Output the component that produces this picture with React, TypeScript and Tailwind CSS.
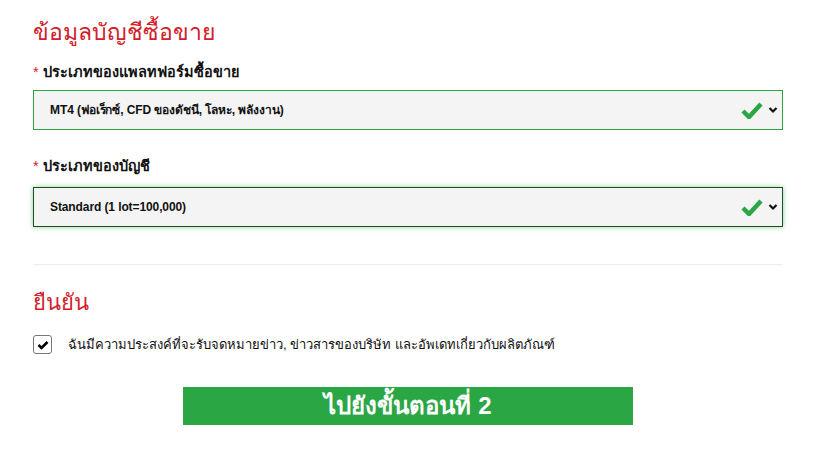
import React from "react";

const Check = () => (
  <svg width="22" height="18" viewBox="0 0 22 18" className="block">
    <path d="M2 10 L8 16 L20 3" fill="none" stroke="#2aa645" strokeWidth="4.5" strokeLinecap="butt" strokeLinejoin="miter" />
  </svg>
);

const Chevron = () => (
  <svg width="10" height="8" viewBox="0 0 10 8" className="block">
    <path d="M1.5 2 L5 5.5 L8.5 2" fill="none" stroke="#111" strokeWidth="2.2" />
  </svg>
);

function SelectBox({ value, focused }: { value: string; focused?: boolean }) {
  return (
    <div
      className={
        "h-[40px] flex items-center bg-[#f4f4f4] pl-[16px] pr-[4px] border " +
        (focused
          ? "border-[#1f4d24] shadow-[0_0_5px_rgba(40,167,69,0.55)]"
          : "border-[#2aa645]")
      }
    >
      <span className="flex-1 text-[12px] font-semibold text-[#111] tracking-[-0.1px]">{value}</span>
      <div className="flex items-center gap-[5px]">
        <Check />
        <Chevron />
      </div>
    </div>
  );
}

export default function App() {
  return (
    <div
      className="w-[821px] h-[458px] bg-white px-[33px] pt-[15px] text-[#111]"
      style={{ fontFamily: '"Liberation Sans", "Noto Sans", sans-serif' }}
    >
      <div className="w-[750px]">
        <h2 className="text-[23px] leading-[34px] text-[#d2202b]">ข้อมูลบัญชีซื้อขาย</h2>
        <div className="mt-[13px] text-[14.5px] font-bold leading-[20px]">
          <span className="text-[#d2202b] font-normal">* </span>ประเภทของแพลทฟอร์มซื้อขาย
        </div>
        <div className="mt-[8px]">
          <SelectBox value="MT4 (ฟอเร็กซ์, CFD ของดัชนี, โลหะ, พลังงาน)" />
        </div>
        <div className="mt-[26px] text-[14.5px] font-bold leading-[20px]">
          <span className="text-[#d2202b] font-normal">* </span>ประเภทของบัญชี
        </div>
        <div className="mt-[11px]">
          <SelectBox value="Standard (1 lot=100,000)" focused />
        </div>
        <div className="mt-[37px] border-t border-[#ececec]" />
        <h2 className="mt-[21px] text-[22px] leading-[34px] text-[#d2202b]">ยืนยัน</h2>
        <div className="mt-[15px] flex items-center">
          <div className="w-[19px] h-[19px] border border-[#777] rounded-[3px] bg-white flex items-center justify-center">
            <svg width="12" height="10" viewBox="0 0 12 10">
              <path d="M1.5 5 L4.5 8 L10.5 2" fill="none" stroke="#000" strokeWidth="2.6" />
            </svg>
          </div>
          <span className="ml-[16px] text-[13px]">
            ฉันมีความประสงค์ที่จะรับจดหมายข่าว, ข่าวสารของบริษัท และอัพเดทเกี่ยวกับผลิตภัณฑ์
          </span>
        </div>
        <div className="mt-[32px] flex justify-center">
          <button className="w-[450px] h-[38px] bg-[#2aa645] text-white text-[24px] font-bold leading-none">
            ไปยังขั้นตอนที่ 2
          </button>
        </div>
      </div>
    </div>
  );
}
